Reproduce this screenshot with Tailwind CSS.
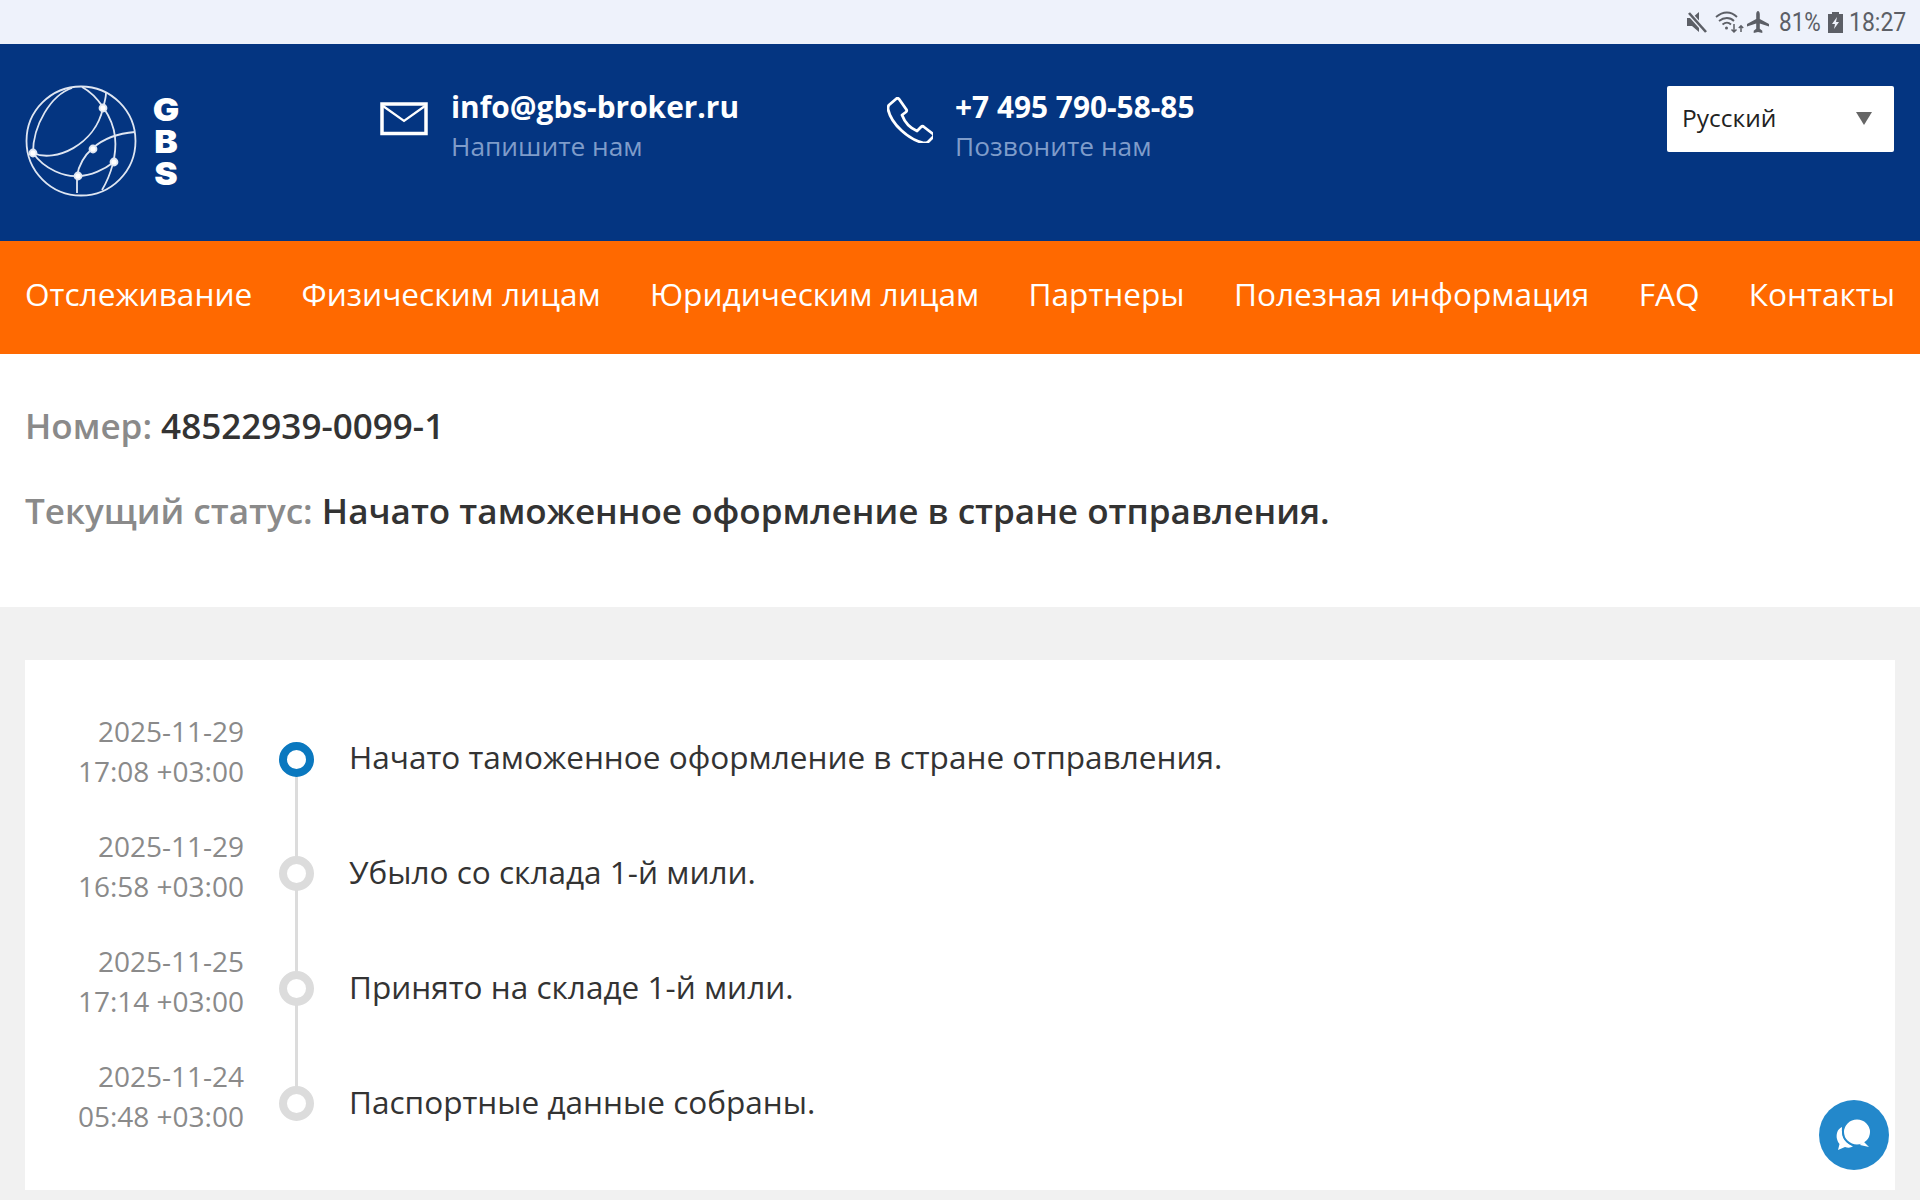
<!DOCTYPE html>
<html lang="ru"><head><meta charset="utf-8"><title>GBS</title>
<script src="https://cdn.jsdelivr.net/npm/@tailwindcss/browser@4"></script></head>
<body class="m-0 h-[1200px] w-[1920px] overflow-hidden bg-[#f1f1f1] font-['Open_Sans',sans-serif]">
<div class="flex h-[44px] items-center justify-end bg-[#eef2fb] pr-[14px] text-[#5c5f66]">
  <svg class="mr-[7px]" width="22" height="22" viewBox="0 0 22 22"><path d="M1 7h5l7-6v20l-7-6H1z" fill="#5c5f66"/><path d="M2 1l18 20" stroke="#eef2fb" stroke-width="5"/><path d="M3 2l17 19" stroke="#5c5f66" stroke-width="2.6"/></svg>
  <svg class="mr-[2px]" width="30" height="24" viewBox="0 0 30 24" fill="none" stroke="#5c5f66" stroke-width="1.8"><path d="M1 7c7-6 15-6 21 0M4 11c5-4 11-4 15 0M7.500 14.500c3-2.500 6-2.500 8.500 0"/><circle cx="11.500" cy="18" r="1.500" fill="#5c5f66" stroke="none"/><path d="M19 14v8M16.500 19.500l2.500 2.500 2.500-2.500M26 22v-6M23.800 18l2.200-2.200 2.200 2.200" stroke-width="1.500"/></svg>
  <svg class="mr-[10px]" width="22" height="22" viewBox="0 0 22 22"><path d="M11 0c1 0 1.800 1.500 1.800 3.500V8L22 13v2.500l-9.200-3v5.300l2.500 2V22L11 21l-4.300 1v-2.200l2.500-2v-5.300L0 15.500V13l9.200-5V3.500C9.200 1.500 10 0 11 0z" fill="#5c5f66"/></svg>
  <span class="mr-[6px] inline-block w-[43px] origin-left scale-x-[0.9] font-['Roboto',sans-serif] text-[25px] leading-none whitespace-nowrap">81%</span>
  <svg class="mr-[6px]" width="15" height="21" viewBox="0 0 15 21"><path d="M4 0h7v2h4v19H0V2h4z" fill="#5c5f66"/><path d="M9 5L4 12h3l-1 5 5-7H8z" fill="#eef2fb"/></svg>
  <span class="inline-block w-[57px] origin-left scale-x-[0.92] font-['Roboto',sans-serif] text-[25px] leading-none whitespace-nowrap">18:27</span>
</div>
<header class="flex h-[197px] bg-[#043581] pl-[25px] pr-[26px]">
  <div class="flex w-[355px] shrink-0 items-start pt-[41px]">
    <svg width="112" height="112" viewBox="0 0 112 112" fill="none" stroke="#dfe6f2" stroke-width="1.800">
      <circle cx="56" cy="56" r="54.500"/>
      <path d="M57 2C72 10 88 32 90 52C92 70 86 90 77 105"/>
      <path d="M47 3C26 10 8 40 8 68"/>
      <path d="M8 68C30 78 70 60 78 23C80 16 81 12 81 8"/>
      <path d="M8 68C20 85 40 92 53 91C66 91 80 84 89 77"/>
      <path d="M52 108V91C55 72 72 50 110 47"/>
      <circle cx="78" cy="23" r="3.500" fill="#fff"/><circle cx="8" cy="68" r="3.500" fill="#fff"/><circle cx="68" cy="64" r="3.500" fill="#fff"/><circle cx="89" cy="77" r="3.500" fill="#fff"/><circle cx="53" cy="91" r="3.500" fill="#fff"/>
    </svg>
    <div class="ml-[17px] mt-[9px] flex scale-x-110 flex-col items-center font-['Inter',sans-serif] text-[32px] leading-[32px] font-black text-white"><span>G</span><span>B</span><span>S</span></div>
  </div>
  <div class="flex w-[507px] shrink-0 items-start pt-[41px]">
    <svg class="mt-[17px] mr-[23px]" width="48" height="36" viewBox="0 0 48 36" fill="none" stroke="#fff"><rect x="2" y="2" width="44" height="29.500" stroke-width="3.500"/><path d="M3 4l21 15L45 4" stroke-width="2.200"/></svg>
    <div class="pt-[1px]"><div class="text-[29.850px] leading-[42px] font-bold text-white">info@gbs-broker.ru</div><div class="text-[26.300px] leading-[37px] text-[#7f9cca]">Напишите нам</div></div>
  </div>
  <div class="flex flex-1 items-start pt-[41px]">
    <svg class="mt-[12px] mr-[22px]" width="46" height="46" viewBox="0 0 46 46" fill="none" stroke="#fff" stroke-width="2.800" stroke-linejoin="round"><path d="M2 8L9 2c1-1 2-1 3 0l7 10c1 1 1 2 0 3l-4 3c3 8 8 13 15 16l4-4c1-1 2-1 3 0l9 7c1 1 1 2 0 3l-5 5c-1 1-3 1-4 1C22 43 4 27 1 12c0-2 0-3 1-4z"/></svg>
    <div class="pt-[1px]"><div class="text-[29.850px] leading-[42px] font-bold text-white">+7 495 790-58-85</div><div class="text-[26.300px] leading-[37px] text-[#7f9cca]">Позвоните нам</div></div>
  </div>
  <div class="mt-[42px] flex h-[66px] w-[227px] items-center justify-between rounded-[2px] bg-white pb-[2px] pl-[15px] pr-[22px] text-[24.500px] text-[#222]">
    <span>Русский</span><span class="h-0 w-0 border-x-[8px] border-t-[13px] border-x-transparent border-t-[#666]"></span>
  </div>
</header>
<nav class="flex h-[113px] items-center justify-between bg-[#ff6900] px-[25px] pb-[7px] text-[31.600px] whitespace-nowrap text-white">
  <a>Отслеживание</a><a>Физическим лицам</a><a>Юридическим лицам</a><a>Партнеры</a><a>Полезная информация</a><a>FAQ</a><a>Контакты</a>
</nav>
<section class="h-[253px] bg-white px-[25px] pt-[48px] text-[35.050px] leading-[48px] font-semibold text-[#8a8a8a]">
  <div>Номер: <span class="text-[#333]">48522939-0099-1</span></div>
  <div class="mt-[37px]">Текущий статус: <span class="text-[#333]">Начато таможенное оформление в стране отправления.</span></div>
</section>
<main class="px-[25px] pt-[53px]">
  <div class="relative h-[530px] bg-white pt-[53px]">
    <div class="flex h-[115px]">
      <div class="-mt-[2px] w-[219px] shrink-0 text-right text-[28px] leading-[40px] text-[#8a8a8a]">2025-11-29<br>17:08 +03:00</div>
      <div class="relative mx-[35px] w-[35px] shrink-0"><div class="absolute top-[46px] left-[16px] h-[115px] w-[3px] bg-[#dcdcdc]"></div><div class="relative mt-[29px] h-[35px] w-[35px] rounded-full border-[8px] border-[#0a78bf] bg-white"></div></div>
      <div class="pt-[24px] text-[31.550px] leading-[40px] text-[#333]">Начато таможенное оформление в стране отправления.</div>
    </div>
    <div class="flex h-[115px]">
      <div class="-mt-[2px] w-[219px] shrink-0 text-right text-[28px] leading-[40px] text-[#8a8a8a]">2025-11-29<br>16:58 +03:00</div>
      <div class="relative mx-[35px] w-[35px] shrink-0"><div class="absolute top-[46px] left-[16px] h-[115px] w-[3px] bg-[#dcdcdc]"></div><div class="relative mt-[28px] h-[35px] w-[35px] rounded-full border-[8px] border-[#dcdcdc] bg-white"></div></div>
      <div class="pt-[24px] text-[31.550px] leading-[40px] text-[#333]">Убыло со склада 1-й мили.</div>
    </div>
    <div class="flex h-[115px]">
      <div class="-mt-[2px] w-[219px] shrink-0 text-right text-[28px] leading-[40px] text-[#8a8a8a]">2025-11-25<br>17:14 +03:00</div>
      <div class="relative mx-[35px] w-[35px] shrink-0"><div class="absolute top-[46px] left-[16px] h-[115px] w-[3px] bg-[#dcdcdc]"></div><div class="relative mt-[28px] h-[35px] w-[35px] rounded-full border-[8px] border-[#dcdcdc] bg-white"></div></div>
      <div class="pt-[24px] text-[31.550px] leading-[40px] text-[#333]">Принято на складе 1-й мили.</div>
    </div>
    <div class="flex h-[115px]">
      <div class="-mt-[2px] w-[219px] shrink-0 text-right text-[28px] leading-[40px] text-[#8a8a8a]">2025-11-24<br>05:48 +03:00</div>
      <div class="relative mx-[35px] w-[35px] shrink-0"><div class="relative mt-[28px] h-[35px] w-[35px] rounded-full border-[8px] border-[#dcdcdc] bg-white"></div></div>
      <div class="pt-[24px] text-[31.550px] leading-[40px] text-[#333]">Паспортные данные собраны.</div>
    </div>
  </div>
</main>
<button class="absolute top-[1100px] left-[1819px] flex h-[70px] w-[70px] items-center justify-center rounded-full bg-[#2388cb]">
  <svg width="42" height="36" viewBox="0 0 42 36"><path d="M9 10C4 12 3 18 4 22c.500 2 1.500 4 2.500 5L5 33l7-3c3 1 6 1 8-1C12 26 8 19 9 10z" fill="#fff"/><ellipse cx="24" cy="15" rx="14" ry="13.500" fill="#fff" stroke="#2388cb" stroke-width="2"/><path d="M30 24l6 6-9-2z" fill="#fff"/></svg>
</button>
</body></html>
